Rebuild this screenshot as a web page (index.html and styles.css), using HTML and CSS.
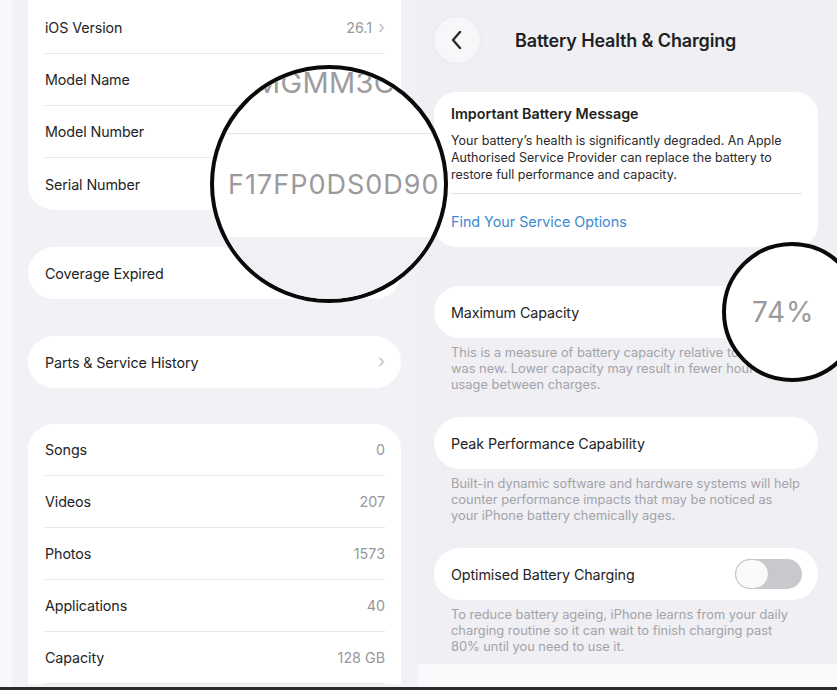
FILE: index.html
```html
<!DOCTYPE html>
<html>
<head>
<meta charset="utf-8">
<link rel="stylesheet" href="styles.css">
</head>
<body>
<div class="page">
  <section class="left">
    <div class="card card-top">
      <div class="row"><span class="label">iOS Version</span><span class="value">26.1 <span class="chev">&#x203A;</span></span></div>
      <div class="row"><span class="label">Model Name</span></div>
      <div class="row"><span class="label">Model Number</span></div>
      <div class="row last"><span class="label">Serial Number</span></div>
    </div>
    <div class="card pill"><div class="row last"><span class="label">Coverage Expired</span></div></div>
    <div class="card pill"><div class="row last"><span class="label">Parts &amp; Service History</span><span class="value"><span class="chev">&#x203A;</span></span></div></div>
    <div class="card card-stats">
      <div class="row"><span class="label">Songs</span><span class="value">0</span></div>
      <div class="row"><span class="label">Videos</span><span class="value">207</span></div>
      <div class="row"><span class="label">Photos</span><span class="value">1573</span></div>
      <div class="row"><span class="label">Applications</span><span class="value">40</span></div>
      <div class="row"><span class="label">Capacity</span><span class="value">128 GB</span></div>
    </div>
  </section>
  <section class="right">
    <header class="nav">
      <div class="back"><svg width="14" height="20" viewBox="0 0 14 20"><path d="M10 2 L3 10 L10 18" fill="none" stroke="#2a2a2c" stroke-width="2.4" stroke-linecap="round" stroke-linejoin="round"/></svg></div>
      <h1 class="title">Battery Health &amp; Charging</h1>
    </header>
    <div class="card msg">
      <h2 class="msg-title">Important Battery Message</h2>
      <p class="msg-body">Your battery’s health is significantly degraded. An Apple Authorised Service Provider can replace the battery to restore full performance and capacity.</p>
      <div class="msg-link">Find Your Service Options</div>
    </div>
    <div class="card rpill"><span class="label">Maximum Capacity</span></div>
    <p class="caption">This is a measure of battery capacity relative to when it was new. Lower capacity may result in fewer hours of usage between charges.</p>
    <div class="card rpill"><span class="label">Peak Performance Capability</span></div>
    <p class="caption">Built-in dynamic software and hardware systems will help counter performance impacts that may be noticed as your iPhone battery chemically ages.</p>
    <div class="card rpill"><span class="label">Optimised Battery Charging</span><span class="toggle"><span class="knob"></span></span></div>
    <p class="caption last">To reduce battery ageing, iPhone learns from your daily charging routine so it can wait to finish charging past 80% until you need to use it.</p>
    <div class="bottom-card"></div>
  </section>
</div>
<div class="baseline"></div>

<div class="loupe loupe-serial">
  <div class="lz-model">MGMM3CH</div>
  <div class="lz-line"></div>
  <div class="lz-serial">F17FP0DS0D90</div>
  <div class="lz-grey"></div>
</div>
<div class="loupe loupe-cap">
  <div class="lz-pct">74%</div>
</div>
</body>
</html>
```
FILE: styles.css
```css
* { box-sizing: border-box; }
html, body { margin: 0; padding: 0; }
body {
  width: 837px;
  height: 690px;
  overflow: hidden;
  position: relative;
  font-family: Inter, "Noto Sans", sans-serif;
  color: #1f1f21;
  background: #efeff4;
}
.page {
  display: flex;
  height: 687px;
  overflow: hidden;
}
.left {
  width: 418px;
  flex: none;
  background: #f1f1f6;
  border-left: 12px solid #f8f8fa;
  padding: 0 17px 0 16px;
  display: flex;
  flex-direction: column;
}
.left > * { flex-shrink: 0; }
.card { background: #fff; }
.card-top {
  margin-top: -24px;
  padding-top: 26px;
  border-radius: 0 0 26px 26px;
}
.pill { border-radius: 26px; margin-top: 37px; }
.card-stats { margin-top: 36px; border-radius: 26px 26px 0 0; }
.row {
  height: 52px;
  margin: 0 16px 0 17px;
  display: flex;
  align-items: center;
  justify-content: space-between;
  border-bottom: 1px solid #e6e6e9;
}
.pill .row { border-bottom: none; }
.card-top .row.last { border-bottom: none; }
.label { font-size: 14.3px; letter-spacing: -0.1px; color: #242426; }
.value { font-size: 14.3px; color: #98989d; display: flex; align-items: center; gap: 6px; }
.chev { color: #c0c0c4; font-size: 18px; line-height: 1; margin-top: -2px; }

.right {
  flex: 1;
  padding: 0 19px 0 16px;
  background: #efeff4;
  display: flex;
  flex-direction: column;
}
.right > * { flex-shrink: 0; }
.nav {
  display: flex;
  align-items: center;
  height: 80px;
}
.back {
  width: 46px; height: 46px;
  border-radius: 50%;
  background: #f7f7f9;
  box-shadow: 0 0 6px rgba(0,0,0,0.04);
  display: flex; align-items: center; justify-content: center;
}
.title {
  margin: 0 0 0 35px;
  font-size: 18px;
  font-weight: 600;
  letter-spacing: -0.15px;
  color: #1f1f21;
}
.msg {
  margin-top: 12px;
  border-radius: 22px;
  padding: 13px 16px 0 17px;
  height: 155px;
}
.msg-title { margin: 0; font-size: 14.3px; font-weight: 600; line-height: 18px; }
.msg-body {
  margin: 9px 0 0 0;
  font-size: 12.5px;
  line-height: 17px;
  color: #2a2a2c;
  padding-bottom: 10px;
  border-bottom: 1px solid #e3e3e6;
}
.msg-link { margin-top: 19px; font-size: 14.3px; color: #3a8ad0; }
.rpill {
  height: 52px;
  border-radius: 26px;
  padding: 0 16px 0 17px;
  display: flex;
  align-items: center;
  justify-content: space-between;
}
.msg + .rpill { margin-top: 39px; }
.caption {
  margin: 7px 0 0 17px;
  padding-right: 17px;
  font-size: 12.85px;
  line-height: 16px;
  color: #a3a3a8;
  height: 72px;
}
.caption.last { height: 57px; }
.toggle {
  width: 67px; height: 30px;
  border-radius: 15px;
  background: #c9c9cd;
  position: relative;
  display: block;
}
.knob {
  position: absolute;
  left: 0; top: 0;
  width: 34px; height: 30px;
  border-radius: 15px;
  background: #fafafa;
  border: 1px solid #c4c4c8;
}
.bottom-card {
  margin: 0 -19px 0 -16px;
  background: #f9f9fb;
  height: 40px;
}
.baseline {
  position: absolute;
  left: 0; bottom: 0;
  width: 837px; height: 3px;
  background: #2b2b2d;
}
.loupe {
  position: absolute;
  border-radius: 50%;
  border: 4px solid #0a0a0a;
  background: #fff;
  overflow: hidden;
}
.loupe-serial { left: 210px; top: 65px; width: 238px; height: 238px; }
.loupe-cap { left: 722px; top: 242px; width: 140px; height: 140px; }
.lz-model {
  position: absolute;
  left: 40px; top: -4px;
  font-size: 29px;
  color: #9c9c9f;
  letter-spacing: 0.3px;
  white-space: nowrap;
}
.lz-line {
  position: absolute;
  left: 0; right: 0; top: 64px;
  height: 1px;
  background: #e4e4e6;
}
.lz-serial {
  position: absolute;
  left: 14px; top: 99px;
  font-size: 27px;
  color: #9a9a9d;
  letter-spacing: 1px;
  white-space: nowrap;
}
.lz-grey {
  position: absolute;
  left: 0; right: 0; top: 168px; bottom: 0;
  background: #f1f1f5;
}
.lz-pct {
  position: absolute;
  left: 26px; top: 49px;
  font-size: 28px;
  color: #9a9a9d;
  letter-spacing: 0.8px;
}
```
